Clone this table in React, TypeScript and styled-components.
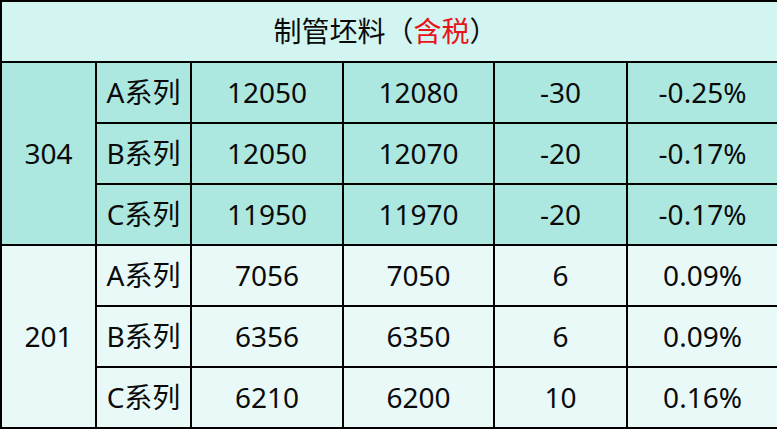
import React from "react";
import styled, { createGlobalStyle } from "styled-components";

const Global = createGlobalStyle`
  html, body { margin: 0; padding: 0; background: #ffffff; }
  body { font-family: "Noto Sans", "Noto Sans CJK SC", sans-serif; }
`;

const Table = styled.table`
  border-collapse: collapse;
  width: 777px;
  table-layout: fixed;
  font-size: 28px;
  color: #0a0a0a;
`;

const Col = styled.col<{ $w: number }>`
  width: ${(p) => p.$w}px;
`;

const Cell = styled.td<{ $bg: string }>`
  border: 2px solid #000;
  background: ${(p) => p.$bg};
  height: 57px;
  padding: 0 0 2px;
  text-align: center;
  vertical-align: middle;
  line-height: 1;
  white-space: nowrap;
`;

const Title = styled(Cell)`
  padding-right: 8px;
`;

const Red = styled.span`
  color: #e8141b;
`;

const HEAD = "#d3f5f1";
const DARK = "#ade8e0";
const LIGHT = "#e8f9f7";

const widths = [95, 95, 152, 151, 133, 151];

type Row = [string, string, string, string, string];

const groups: { grade: string; bg: string; rows: Row[] }[] = [
  {
    grade: "304",
    bg: DARK,
    rows: [
      ["A系列", "12050", "12080", "-30", "-0.25%"],
      ["B系列", "12050", "12070", "-20", "-0.17%"],
      ["C系列", "11950", "11970", "-20", "-0.17%"],
    ],
  },
  {
    grade: "201",
    bg: LIGHT,
    rows: [
      ["A系列", "7056", "7050", "6", "0.09%"],
      ["B系列", "6356", "6350", "6", "0.09%"],
      ["C系列", "6210", "6200", "10", "0.16%"],
    ],
  },
];

export default function App() {
  return (
    <>
      <Global />
      <Table>
        <colgroup>
          {widths.map((w, i) => (
            <Col key={i} $w={w} />
          ))}
        </colgroup>
        <tbody>
          <tr>
            <Title $bg={HEAD} colSpan={6}>
              制管坯料（<Red>含税</Red>）
            </Title>
          </tr>
          {groups.map((g) =>
            g.rows.map((r, i) => (
              <tr key={g.grade + i}>
                {i === 0 && (
                  <Cell $bg={g.bg} rowSpan={3}>
                    {g.grade}
                  </Cell>
                )}
                {r.map((v, j) => (
                  <Cell key={j} $bg={g.bg}>
                    {v}
                  </Cell>
                ))}
              </tr>
            ))
          )}
        </tbody>
      </Table>
    </>
  );
}
